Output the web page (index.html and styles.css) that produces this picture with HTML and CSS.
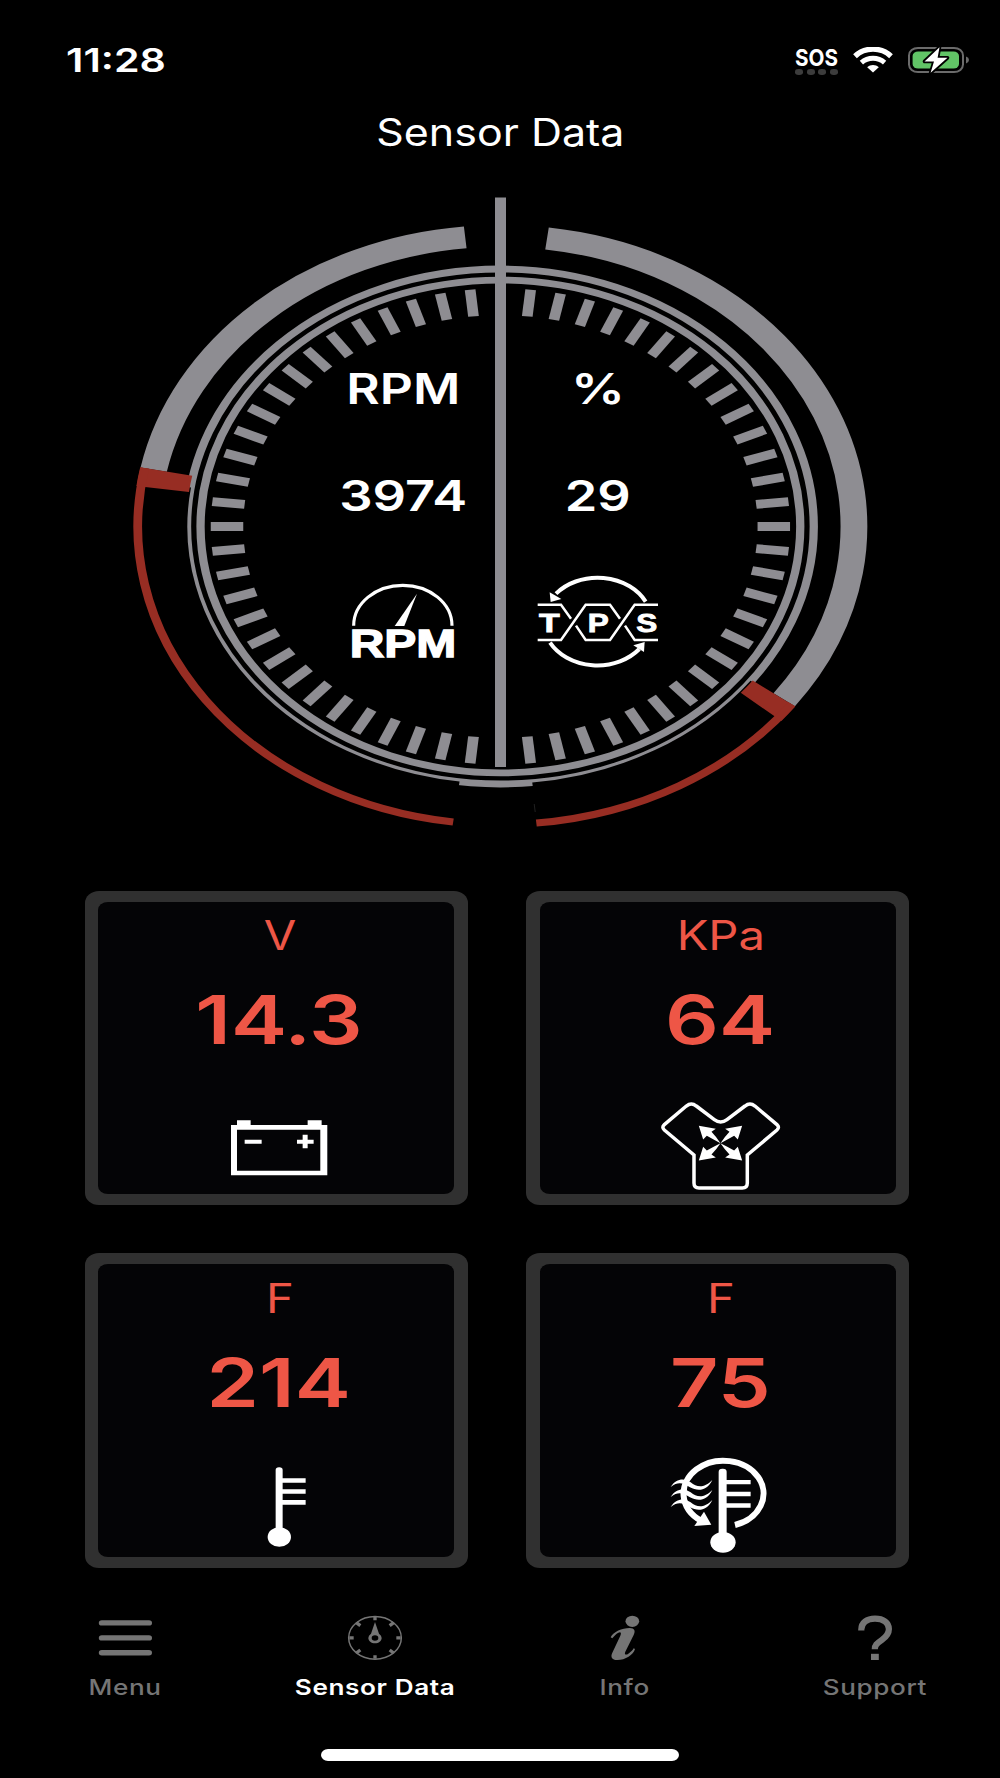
FILE: index.html
```
<!DOCTYPE html>
<html lang="en">
<head>
<meta charset="utf-8">
<title>Sensor Data</title>
<link rel="stylesheet" href="styles.css">
</head>
<body>
<div class="screen">
  <header class="status">
    <span class="time"><span class="time-text">11:28</span></span>
    <div class="status-icons">
      <div class="sos">
        <span class="sos-text">SOS</span>
        <span class="sos-dots"><i></i><i></i><i></i><i></i></span>
      </div>
      <svg class="wifi" width="40" height="26" viewBox="0 0 40 26" fill="none" stroke="#fff">
        <path d="M2 9.2C12-.2 28-.2 38 9.2" stroke-width="5.4"/>
        <path d="M8.4 15.6C15 9.9 25 9.9 31.6 15.6" stroke-width="5"/>
        <path d="M20 25.4L14.2 20.2C17.4 17.2 22.6 17.2 25.8 20.2Z" fill="#fff" stroke="none"/>
      </svg>
      <svg class="battery" width="62" height="30" viewBox="0 0 62 30">
        <rect x="1" y="2.9" width="54" height="24.2" rx="9" ry="7.5" fill="none" stroke="#6b6b6b" stroke-width="2"/>
        <path d="M58 11.6Q61 12.6 61 15T58 18.4Z" fill="#6b6b6b"/>
        <rect x="4.6" y="6.4" width="46.4" height="17.2" rx="5.5" ry="4.5" fill="#61c466"/>
        <path d="M31.5 2.2L16.5 16.4H26L22.6 27.8L39.5 12.8H29.6Z" fill="#fff" stroke="#000" stroke-width="3.6" stroke-linejoin="round" paint-order="stroke"/>
      </svg>
    </div>
  </header>

  <h1 class="title"><span class="title-text">Sensor Data</span></h1>

  <svg class="dial" width="1000" height="690" viewBox="0 171 1000 690">
    <defs>
      <g id="ticks">
        <path id="tick" d="M211.3 0H238"/>
        <use href="#tick" transform="rotate(6)"/>
        <use href="#tick" transform="rotate(12)"/>
        <use href="#tick" transform="rotate(18)"/>
        <use href="#tick" transform="rotate(24)"/>
      </g>
    </defs>
    <g transform="translate(500.4 526.5) scale(1.217 1)" fill="none" stroke="#8e8d92">
      <g stroke-width="8.8">
        <use href="#ticks"/>
        <use href="#ticks" transform="rotate(30)"/>
        <use href="#ticks" transform="rotate(60)"/>
        <use href="#ticks" transform="rotate(90)"/>
        <use href="#ticks" transform="rotate(120)"/>
        <use href="#ticks" transform="rotate(150)"/>
        <use href="#ticks" transform="rotate(180)"/>
        <use href="#ticks" transform="rotate(210)"/>
        <use href="#ticks" transform="rotate(240)"/>
        <use href="#ticks" transform="rotate(270)"/>
        <use href="#ticks" transform="rotate(300)"/>
        <use href="#ticks" transform="rotate(330)"/>
      </g>
      <circle r="246.4" stroke-width="6.8"/>
      <circle r="257.5" stroke-width="6.8"/>
      <!-- trims the outer ring along the unfilled range of each arc -->
      <path d="M-273.6 -41.9A276.5 276.5 0 0 0 -36.1 274.5" stroke="#000" stroke-width="39.2"/>
      <path d="M221.2 165.9A276.5 276.5 0 0 1 28.2 275.5" stroke="#000" stroke-width="39.2"/>
      <!-- filled ranges -->
      <path d="M-284.9 -56.9A290.5 290.5 0 0 1 -28.9 -289.1" stroke-width="22"/>
      <path d="M38.3 -288A290.5 290.5 0 0 1 233.2 173.2" stroke-width="22"/>
      <!-- markers and remaining ranges -->
      <g stroke="#972d23">
        <path d="M-274.6 -54.9A280 280 0 0 0 -277.5 -37.5" stroke-width="43.6"/>
        <path d="M224.8 167A280 280 0 0 1 214.2 180.4" stroke-width="43.6"/>
        <path d="M-292.2 -58.4A298 298 0 0 0 -38.8 295.5" stroke-width="7.2"/>
        <path d="M239.3 177.7A298 298 0 0 1 29.5 296.5" stroke-width="7.2"/>
      </g>
    </g>
    <path d="M500.5 197.5V767" stroke="#8e8d92" stroke-width="11"/>
    <path d="M534.2 804L535.2 812" stroke="#202020" stroke-width="1"/>

    <g class="dial-text">
      <text x="403.3" y="404" textLength="114" lengthAdjust="spacingAndGlyphs">RPM</text>
      <text x="598" y="404" textLength="54" lengthAdjust="spacingAndGlyphs">%</text>
      <text x="403.2" y="511" textLength="128" lengthAdjust="spacingAndGlyphs">3974</text>
      <text x="597.8" y="511" textLength="66" lengthAdjust="spacingAndGlyphs">29</text>
    </g>

    <g transform="translate(120 500) scale(.33333)">
      <path d="M701 377A147.5 121 0 0 1 996 377" fill="none" stroke="#fff" stroke-width="9.5"/>
      <path d="M891 281L853 378H824Z" fill="#fff"/>
      <text class="rpm-label" x="689" y="472" textLength="320" lengthAdjust="spacingAndGlyphs">RPM</text>
    </g>

    <g transform="translate(500 500) scale(.33333)" fill="none" stroke="#fff">
      <path d="M168 281A162 132 0 0 1 437 305" stroke-width="12"/>
      <path d="M150 428A162 132 0 0 0 418 447" stroke-width="12"/>
      <path d="M152 306L149 277L184 297Z" fill="#fff" stroke="none"/>
      <path d="M434 426L400 436L432 456Z" fill="#fff" stroke="none"/>
      <g stroke-width="7.5">
        <path d="M113 314H183L213 356"/>
        <path d="M113 420H183L257 314H330L360 356"/>
        <path d="M228 377L257 420H330L404 314H474"/>
        <path d="M375 377L404 420H474"/>
      </g>
      <g class="tps-label">
        <text x="148" y="395" textLength="62" lengthAdjust="spacingAndGlyphs">T</text>
        <text x="295" y="395" textLength="63" lengthAdjust="spacingAndGlyphs">P</text>
        <text x="440" y="395" textLength="63" lengthAdjust="spacingAndGlyphs">S</text>
      </g>
    </g>
  </svg>

  <main class="cards">
    <section class="card">
      <div class="card-face">
        <span class="unit">V</span>
        <span class="value">14.3</span>
        <svg width="133.3" height="100" viewBox="430 640 400 300" fill="#fff">
          <path fill-rule="evenodd" d="M484 733H502V719H543V733H714V719H756V733H773V884H484ZM502 747V870H752V747Z"/>
          <path d="M525 777H576V789H525ZM682 777H699V762H714V777H732V789H714V803H699V789H682Z"/>
        </svg>
      </div>
    </section>
    <section class="card">
      <div class="card-face">
        <span class="unit">KPa</span>
        <span class="value">64</span>
        <svg width="133.3" height="100" viewBox="433 640 400 300" fill="#fff">
          <path fill="none" stroke="#fff" stroke-width="10.5" d="M553 907Q553 922 568 922H698Q713 922 713 907V823L802 748Q811 740 802 732L736 676Q721 664 706 676L652 717Q633 731 614 717L560 676Q545 664 530 676L464 732Q455 740 464 748L553 823Z"/>
          <g transform="translate(632.5 787.5)">
            <path id="arrow" d="M0 0Q-12 -18 -27 -34L-14 -43L-65 -52L-52 -11L-41 -22Q-20 -10 0 0Z"/>
            <use href="#arrow" transform="scale(-1 1)"/>
            <use href="#arrow" transform="scale(1 -1)"/>
            <use href="#arrow" transform="scale(-1 -1)"/>
          </g>
        </svg>
      </div>
    </section>
    <section class="card">
      <div class="card-face">
        <span class="unit">F</span>
        <span class="value">214</span>
        <svg width="133.3" height="100" viewBox="430 648 400 300" fill="#fff">
          <rect x="618" y="682" width="21" height="200" rx="10" ry="8"/>
          <ellipse cx="629" cy="891" rx="35" ry="29.5"/>
          <path d="M636 715H708V728H636ZM636 748H708V761H636ZM636 780H708V794H636Z"/>
        </svg>
      </div>
    </section>
    <section class="card">
      <div class="card-face">
        <span class="unit">F</span>
        <span class="value">75</span>
        <svg width="133.3" height="100" viewBox="433 648 400 300" fill="#fff">
          <path d="M676 855A120 98.5 0 1 0 574 842" fill="none" stroke="#fff" stroke-width="18"/>
          <path d="M605 854L554 858L583 815Z"/>
          <path id="wave" d="M483 741C500 714 525 714 543 727C562 742 582 746 608 720C592 753 565 755 541 742C522 731 508 722 483 741Z"/>
          <use href="#wave" y="30"/>
          <use href="#wave" y="60"/>
          <rect x="627" y="686" width="24" height="210" rx="11" ry="9"/>
          <ellipse cx="640" cy="907" rx="38" ry="31"/>
          <path d="M648 720H723V733H648ZM648 755H723V769H648ZM648 790H723V803H648Z"/>
        </svg>
      </div>
    </section>
  </main>

  <nav class="tabs">
    <div class="tab">
      <svg width="80" height="52" viewBox="0 0 80 52" fill="currentColor">
        <rect x="13.8" y="8.2" width="53.2" height="5.4" rx="3" ry="2.7"/>
        <rect x="13.8" y="23.2" width="53.2" height="5.4" rx="3" ry="2.7"/>
        <rect x="13.8" y="38" width="53.2" height="5.4" rx="3" ry="2.7"/>
      </svg>
      <span class="tab-label">Menu</span>
    </div>
    <div class="tab tab-active">
      <svg width="80" height="52" viewBox="-15 21 240 156" fill="#757575">
        <ellipse cx="105" cy="98.5" rx="79" ry="64" fill="none" stroke="#757575" stroke-width="4.5"/>
        <path d="M105 36V46M105 151V161M28 98.5H41M169 98.5H182M49 53L61 62M161 53L149 62M49 144L61 135M161 144L149 135" stroke="#757575" stroke-width="10"/>
        <path fill-rule="evenodd" d="M105 51L117 86Q125 91 125 99C125 108 116 115 105 115S85 108 85 99Q85 91 93 86ZM105 91A10 8 0 0 0 105 107A10 8 0 0 0 105 91Z"/>
      </svg>
      <span class="tab-label">Sensor Data</span>
    </div>
    <div class="tab">
      <svg width="80" height="52" viewBox="735 21 240 156" fill="currentColor">
        <ellipse cx="877" cy="49" rx="20.5" ry="17"/>
        <path d="M812 97C820 80 846 69 869 69C884 69 887 78 881 90L856 140C852 149 858 151 865 146C873 141 878 136 881 130L885 132C880 150 856 165 832 165C815 165 811 155 817 143L841 92C845 83 842 79 835 83C828 87 822 93 817 100Z"/>
      </svg>
      <span class="tab-label">Info</span>
    </div>
    <div class="tab">
      <svg width="80" height="52" viewBox="0 0 80 52">
        <path d="M26.3 18.4V17.6C26.3 10.6 31.8 6.6 40 6.6C48.4 6.6 53.9 10.8 53.9 17C53.9 21.8 51.4 24.8 46.8 28C41.5 31.6 39.8 33.4 39.8 37.2" fill="none" stroke="currentColor" stroke-width="6.2"/>
        <path d="M36 41.8H43.8V48H36Z" fill="currentColor"/>
      </svg>
      <span class="tab-label">Support</span>
    </div>
  </nav>
  <div class="home-bar"></div>
</div>
</body>
</html>
```
FILE: styles.css
```
* {
  box-sizing: border-box;
}

body {
  margin: 0;
  background: #000;
  color: #fff;
  font-family: Inter, "Liberation Sans", sans-serif;
}

svg {
  display: block;
  flex: none;
}

.screen {
  display: flex;
  flex-direction: column;
  width: 1000px;
  height: 1778px;
  overflow: hidden;
}

.status {
  display: flex;
  align-items: center;
  justify-content: space-between;
  height: 94px;
  padding: 26px 30px 0 66px;
}

.time {
  font-size: 32.6px;
  font-weight: 600;
}

.time-text {
  display: inline-block;
  transform: scaleX(1.262);
  transform-origin: left;
}

.status-icons {
  display: flex;
  align-items: center;
  gap: 15px;
}

.sos {
  display: flex;
  flex-direction: column;
  align-items: center;
  width: 43px;
  padding-top: 2px;
}

.sos-text {
  font-size: 23.5px;
  font-weight: 700;
  line-height: 20px;
  transform: scaleX(0.88);
}

.sos-dots {
  display: flex;
  justify-content: space-between;
  width: 43px;
  margin-top: 1.5px;
}

.sos-dots i {
  width: 8px;
  height: 5.5px;
  border-radius: 45%;
  background: #3c3c3c;
}

.title {
  display: flex;
  align-items: center;
  justify-content: center;
  height: 77px;
  margin: 0;
  font-size: 37.5px;
  font-weight: 400;
}

.title-text {
  transform: scaleX(1.145);
}

.dial-text {
  fill: #fff;
  font-size: 42px;
  font-weight: 600;
  text-anchor: middle;
}

.rpm-label {
  fill: #fff;
  stroke: #fff;
  stroke-width: 4px;
  font: 700 119px "Liberation Sans", sans-serif;
}

.tps-label {
  fill: #fff;
  stroke-width: 2.5px;
  font: 700 75px "Liberation Sans", sans-serif;
  text-anchor: middle;
}

.cards {
  display: grid;
  grid-template-columns: 383px 383px;
  grid-template-rows: 314.5px 314.5px;
  gap: 48.2px 58.4px;
  padding: 29.8px 0 0 84.7px;
}

.card {
  padding: 11px 13.5px;
  border-radius: 14px / 12px;
  background: #303030;
}

.card-face {
  display: flex;
  flex-direction: column;
  align-items: center;
  height: 292.5px;
  padding: 9.7px 0 0 7px;
  border-radius: 10px / 8px;
  background: #040406;
  color: #ee5646;
}

.unit {
  font-size: 40.4px;
  line-height: 50px;
  transform: scaleX(1.168);
}

.value {
  margin: 18.5px 2.5px 33.8px 0;
  font-size: 67.4px;
  font-weight: 600;
  line-height: 80px;
  transform: scaleX(1.25);
}

.tabs {
  display: grid;
  grid-template-columns: repeat(4, 1fr);
  padding-top: 43.8px;
}

.tab {
  display: flex;
  flex-direction: column;
  align-items: center;
  color: #757575;
}

.tab-label {
  margin-top: 8px;
  font-size: 21.5px;
  font-weight: 500;
  line-height: 30px;
  letter-spacing: 0.5px;
  transform: scaleX(1.215);
}

.tab-active {
  color: #fff;
}

.tab-active .tab-label {
  font-weight: 600;
}

.home-bar {
  width: 358px;
  height: 12px;
  margin: 47px auto 0;
  border-radius: 7px / 6px;
  background: #fff;
}
```
